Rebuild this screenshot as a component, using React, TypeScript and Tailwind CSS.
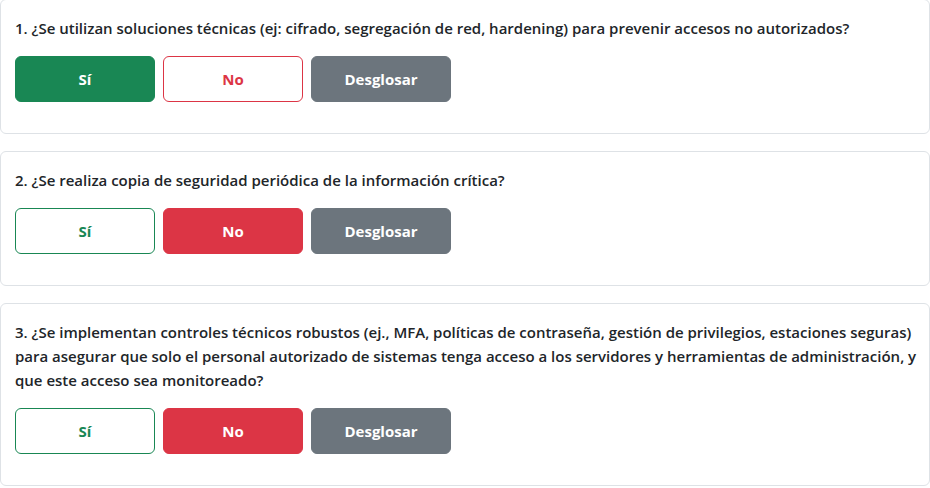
import { useState } from "react";

type Answer = "si" | "no" | null;

type Question = {
    id: number;
    texto: string;
    respuesta: Answer;
};

const preguntas: Question[] = [
    { id: 1, texto: "¿Se utilizan soluciones técnicas (ej: cifrado, segregación de red, hardening) para prevenir accesos no autorizados?", respuesta: "si" },
    { id: 2, texto: "¿Se realiza copia de seguridad periódica de la información crítica?", respuesta: "no" },
    { id: 3, texto: "¿Se implementan controles técnicos robustos (ej., MFA, políticas de contraseña, gestión de privilegios, estaciones seguras) para asegurar que solo el personal autorizado de sistemas tenga acceso a los servidores y herramientas de administración, y que este acceso sea monitoreado?", respuesta: "no" },
];

function QuestionCard({ q }: { q: Question }) {
    const [resp, setResp] = useState<Answer>(q.respuesta);
    return (
        <article className="bg-white border border-[#dee2e6] rounded-md pl-[14px] pr-2 pt-4 pb-4">
            <p className="text-[15px] leading-6 font-semibold text-[#212529] mb-4">{q.id}. {q.texto}</p>
            <div className="flex gap-2 mb-[15px]">
                <button
                    onClick={() => setResp("si")}
                    className={`w-[140px] h-[46px] rounded-md border text-[15px] font-bold ${resp === "si" ? "bg-[#198754] border-[#198754] text-white" : "bg-white border-[#198754] text-[#198754]"}`}
                >
                    Sí
                </button>
                <button
                    onClick={() => setResp("no")}
                    className={`w-[140px] h-[46px] rounded-md border text-[15px] font-bold ${resp === "no" ? "bg-[#dc3545] border-[#dc3545] text-white" : "bg-white border-[#dc3545] text-[#dc3545]"}`}
                >
                    No
                </button>
                <button className="w-[140px] h-[46px] rounded-md border border-[#6c757d] bg-[#6c757d] text-white text-[15px] font-bold">
                    Desglosar
                </button>
            </div>
        </article>
    );
}

export default function App() {
    return (
        <main className="bg-white min-h-screen font-['Open_Sans',sans-serif] -mt-px">
            <div className="flex flex-col gap-[17px]">
                {preguntas.map((q) => (
                    <QuestionCard key={q.id} q={q} />
                ))}
            </div>
        </main>
    );
}
